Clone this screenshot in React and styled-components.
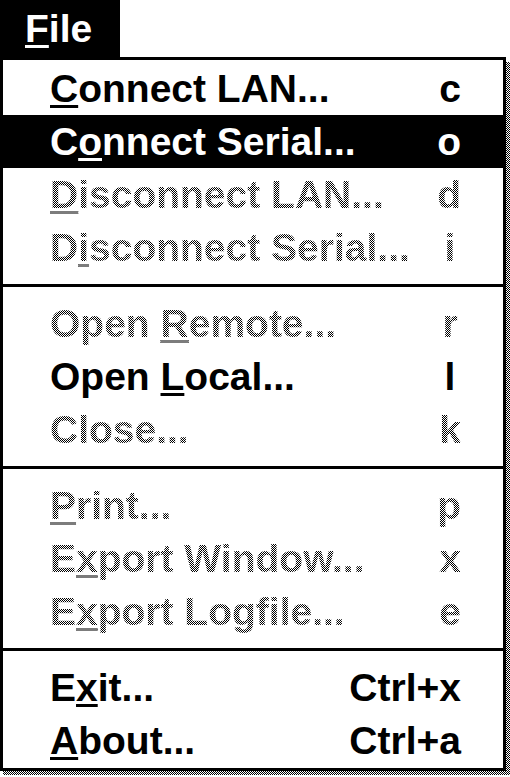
import React from "react";
import styled, { createGlobalStyle, css } from "styled-components";

const GlobalStyle = createGlobalStyle`
  html, body {
    margin: 0;
    padding: 0;
    background: #fff;
  }
  body {
    font-family: "Liberation Sans", Arial, sans-serif;
    font-weight: bold;
    font-size: 39px;
  }
`;

// 1px black/white checkerboard, the Windows 3.x grey
const DITHER = "repeating-conic-gradient(#000 0 25%, #fff 0 50%) 0 0 / 2px 2px";

const menuItems = [
  [
    { label: "Connect LAN...", key: 0, shortcut: "c" },
    { label: "Connect Serial...", key: 1, shortcut: "o", active: true },
    { label: "Disconnect LAN...", key: 0, shortcut: "d", disabled: true },
    { label: "Disconnect Serial...", key: 1, shortcut: "i", disabled: true },
  ],
  [
    { label: "Open Remote...", key: 5, shortcut: "r", disabled: true },
    { label: "Open Local...", key: 5, shortcut: "l" },
    { label: "Close...", shortcut: "k", disabled: true },
  ],
  [
    { label: "Print...", key: 0, shortcut: "p", disabled: true },
    { label: "Export Window...", key: 1, shortcut: "x", disabled: true },
    { label: "Export Logfile...", key: 1, shortcut: "e", disabled: true },
  ],
  [
    { label: "Exit...", key: 1, shortcut: "Ctrl+x" },
    { label: "About...", key: 0, shortcut: "Ctrl+a" },
  ],
];

function Mnemonic({ text, index }) {
  if (index === undefined) return text;
  return (
    <>
      {text.slice(0, index)}
      <Key>{text[index]}</Key>
      {text.slice(index + 1)}
    </>
  );
}

function App() {
  return (
    <>
      <GlobalStyle />
      <Screen>
        <MenuTitle>
          <Key>F</Key>ile
        </MenuTitle>
        <Dropdown>
          {menuItems.map((group, gi) => (
            <React.Fragment key={gi}>
              {gi > 0 && <Separator />}
              {group.map((item) => (
                <Item key={item.label} $active={item.active}>
                  <Label $disabled={item.disabled}>
                    <Mnemonic text={item.label} index={item.key} />
                  </Label>
                  <Shortcut $disabled={item.disabled}>{item.shortcut}</Shortcut>
                </Item>
              ))}
            </React.Fragment>
          ))}
        </Dropdown>
      </Screen>
    </>
  );
}

const Screen = styled.div`
  position: relative;
  z-index: 0;
  display: flex;
  flex-direction: column;
  align-items: flex-start;
  width: 510px;
  height: 777px;
  overflow: hidden;
  background: #fff;
`;

const MenuTitle = styled.div`
  box-sizing: border-box;
  width: 120px;
  height: 57px;
  line-height: 57px;
  padding-left: 25px;
  background: #000;
  color: #fff;
`;

const Key = styled.span`
  text-decoration: underline;
  text-decoration-thickness: 3px;
  text-underline-offset: 3px;
`;

const Dropdown = styled.div`
  position: relative;
  box-sizing: border-box;
  width: 506px;
  border: 3px solid #000;
  background: #fff;
  padding: 2px 0 1px;

  &::before {
    content: "";
    position: absolute;
    top: 2px;
    left: 0;
    right: -7px;
    bottom: -7px;
    background: ${DITHER};
    z-index: -1;
  }
`;

const disabledText = css`
  color: transparent;
  background: ${DITHER};
  -webkit-background-clip: text;
  background-clip: text;

  ${Key} {
    text-decoration-color: #7c7c7c;
  }
`;

const Item = styled.div`
  display: flex;
  align-items: center;
  height: 53px;
  line-height: 53px;
  padding: 0 42px 0 47px;
  background: ${(p) => (p.$active ? "#000" : "transparent")};
  color: ${(p) => (p.$active ? "#fff" : "#000")};
`;

const Label = styled.span`
  flex: 1;
  white-space: nowrap;
  ${(p) => p.$disabled && disabledText}
`;

const Shortcut = styled.span`
  min-width: 22px;
  text-align: center;
  white-space: nowrap;
  ${(p) => p.$disabled && disabledText}
`;

const Separator = styled.div`
  height: 3px;
  margin: 10px 0;
  background: #000;
`;

export default App;
